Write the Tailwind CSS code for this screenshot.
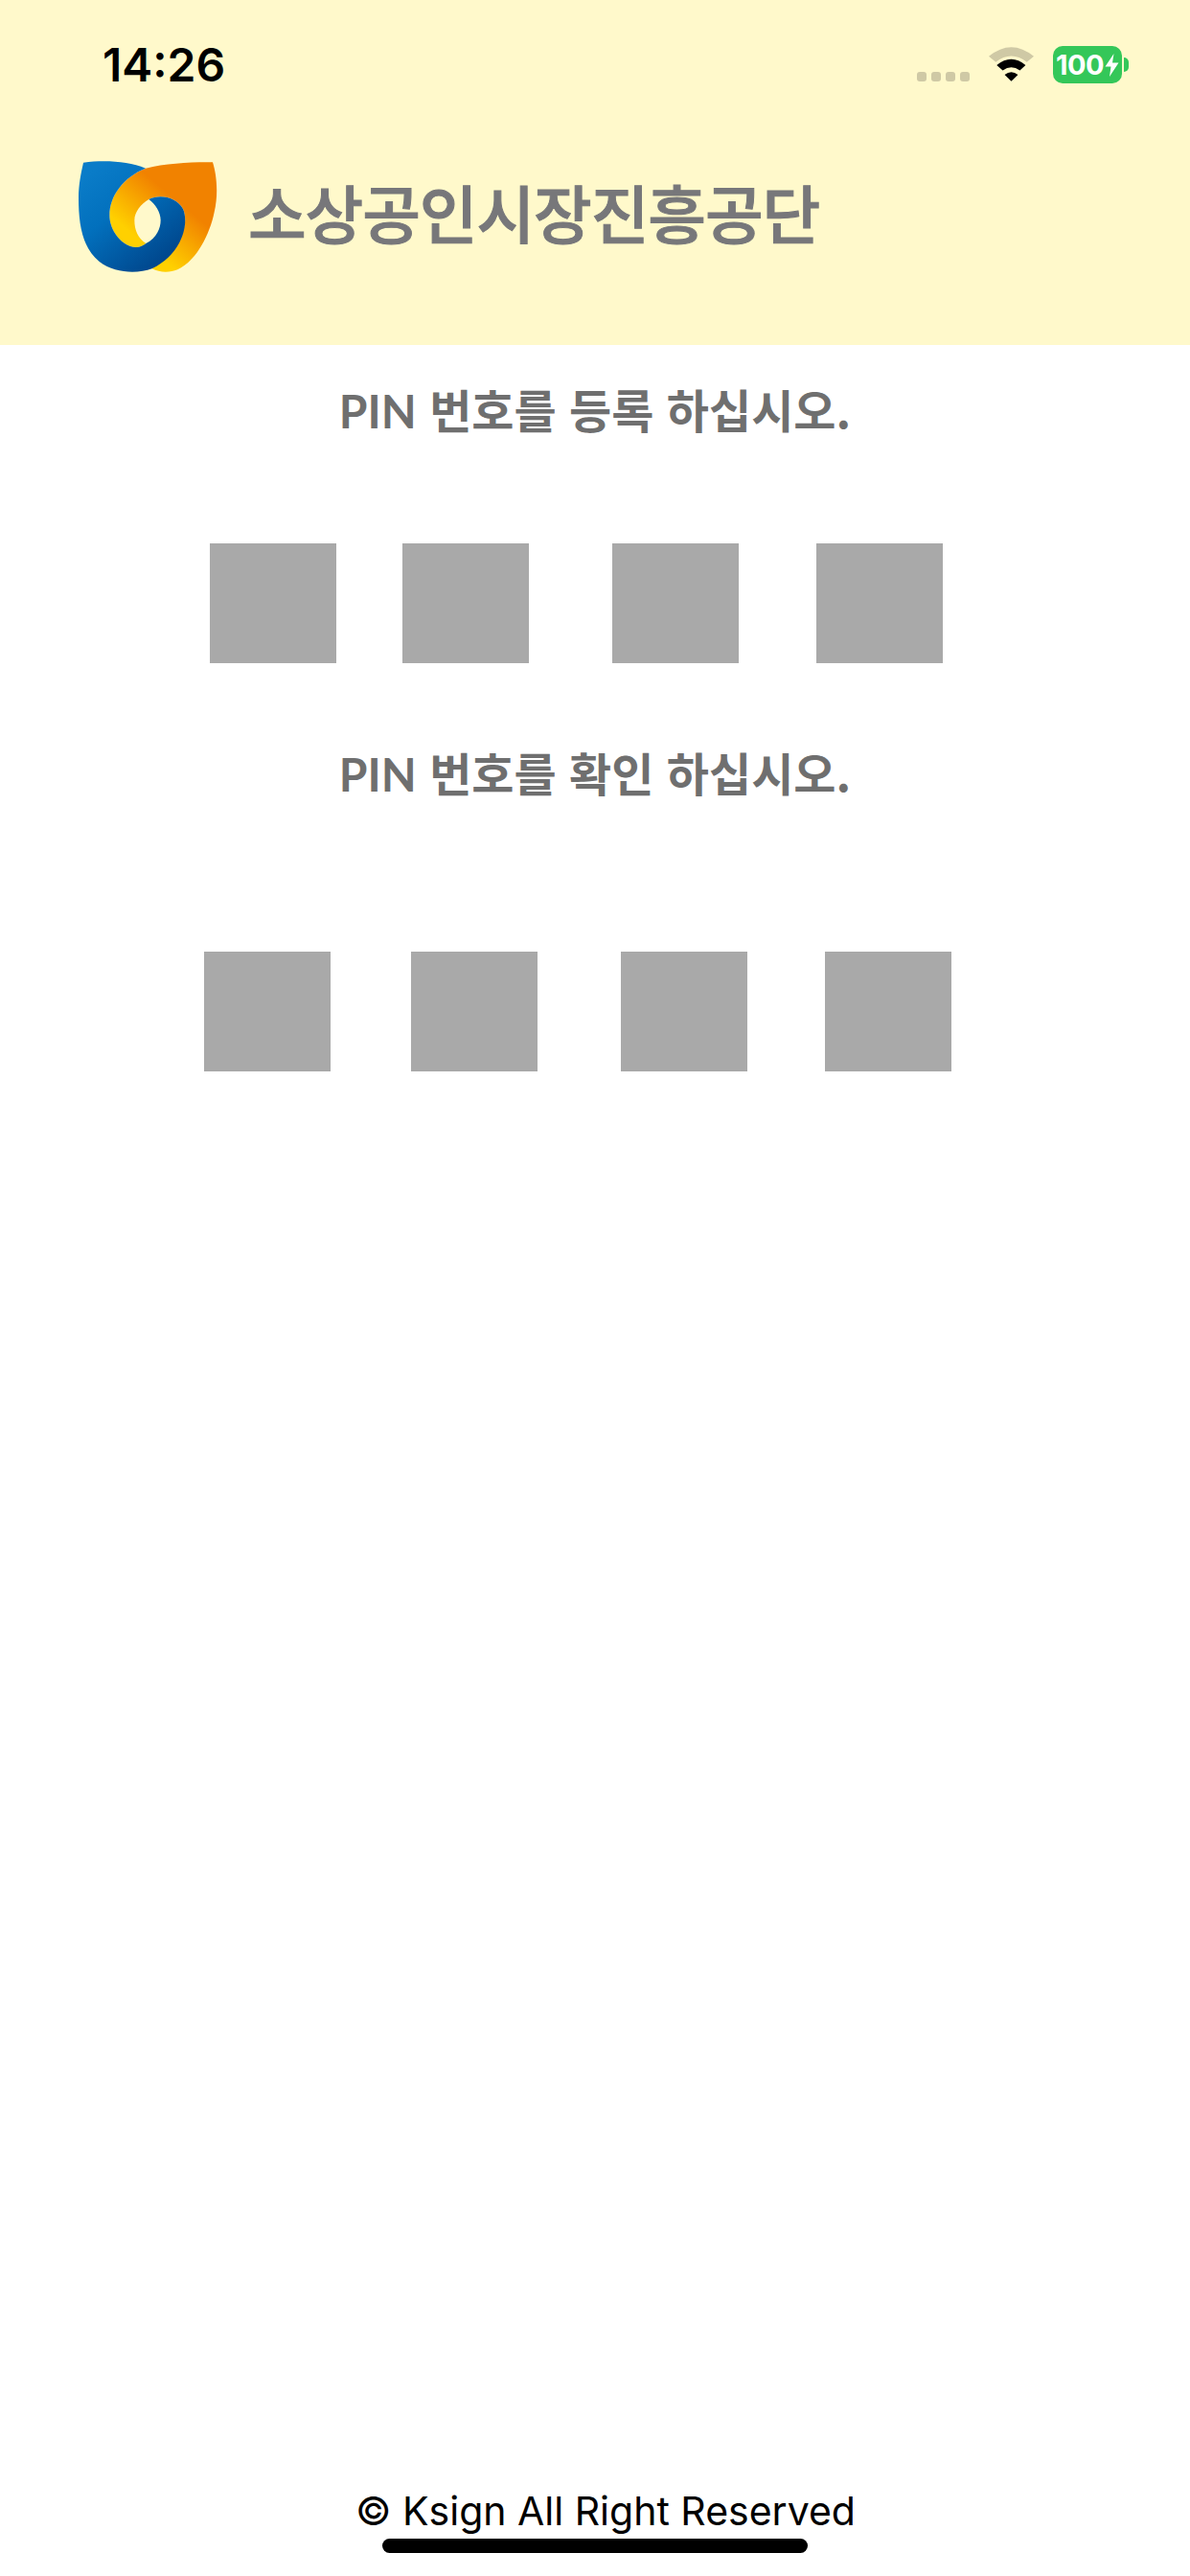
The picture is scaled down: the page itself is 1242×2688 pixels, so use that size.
<!DOCTYPE html>
<html lang="ko">
<head>
    <meta charset="UTF-8">
    <meta name="viewport" content="width=device-width, initial-scale=1.0">
    <title>PIN 등록</title>
    <script src="https://cdn.jsdelivr.net/npm/@tailwindcss/browser@4"></script>
</head>
<body class="bg-white">
    <div class="relative w-[1242px] h-[2688px] flex flex-col overflow-hidden bg-white">

        <!-- Header -->
        <header class="h-[360px] shrink-0 bg-[#fff9cb]">
            <!-- Status bar -->
            <div class="h-[168px] flex items-start">
                <span class="ml-[107px] mt-[39px] text-[48px] leading-[57px] font-semibold text-black font-['Inter',sans-serif]">14:26</span>
                <div class="ml-auto mr-[64px] mt-[48px] flex items-start">
                    <div class="mt-[27px] flex gap-[5px]">
                        <span class="w-[10px] h-[10px] rounded-[3px] bg-[#cfc9a5]"></span>
                        <span class="w-[10px] h-[10px] rounded-[3px] bg-[#cfc9a5]"></span>
                        <span class="w-[10px] h-[10px] rounded-[3px] bg-[#cfc9a5]"></span>
                        <span class="w-[10px] h-[10px] rounded-[3px] bg-[#cfc9a5]"></span>
                    </div>
                    <svg class="ml-[20px] mt-[1px]" width="47" height="36" viewBox="305 57 142 108">
                        <path d="M305 86 Q376 28 447 86 L425 104 Q376 66 327 104 Z" fill="#cfc9a5"/>
                        <path d="M330 114 Q376 76 421 114 L403 131 Q376 110 349 131 Z" fill="#000"/>
                        <path d="M355 144 Q376 128 397 144 L376 165 Z" fill="#000"/>
                    </svg>
                    <div class="ml-[20px] flex items-center">
                        <div class="w-[72px] h-[39px] rounded-[10px] bg-[#34c759] flex items-center pl-[3px]">
                            <span class="text-[29px] leading-[39px] font-bold text-white font-['Inter',sans-serif] tracking-[-0.5px]">100</span>
                            <svg class="ml-[1px]" width="15" height="24" viewBox="0 0 15 24">
                                <path d="M9.5 0 L0.5 13.5 L6.5 13.5 L5 24 L14.5 9.5 L8 9.5 Z" fill="#fff"/>
                            </svg>
                        </div>
                        <div class="ml-[2px] w-[5px] h-[15px] rounded-r-full bg-[#34c759]"></div>
                    </div>
                </div>
            </div>
            <!-- Logo -->
            <div class="ml-[82px] flex items-start">
                <svg width="145" height="116" viewBox="65 55 435 348">
                    <defs>
                        <linearGradient id="logoBlue" x1="0.1" y1="0.1" x2="0.75" y2="0.95">
                            <stop offset="0" stop-color="#0a7cc8"/>
                            <stop offset="0.4" stop-color="#0270bd"/>
                            <stop offset="1" stop-color="#00468c"/>
                        </linearGradient>
                        <linearGradient id="logoOrange" x1="0.78" y1="0.2" x2="0.25" y2="0.85">
                            <stop offset="0" stop-color="#f18200"/>
                            <stop offset="0.25" stop-color="#f18200"/>
                            <stop offset="0.85" stop-color="#ffd000"/>
                        </linearGradient>
                    </defs>
                    <path d="M485 59 C420 58 340 62 275 78 C205 105 162 165 162 225 C162 275 205 325 245 325 C258 325 268 320 276 313 C250 295 240 270 240 240 C240 215 260 190 285 175 C320 158 372 168 392 205 C410 245 395 320 295 392 C320 405 350 405 375 395 C430 370 475 290 490 215 C503 160 498 100 485 59 Z" fill="url(#logoOrange)"/>
                    <path d="M80 60 C145 52 220 55 275 78 C205 105 162 165 162 225 C162 275 205 325 245 325 C258 325 268 320 276 313 C310 295 322 265 322 240 C322 215 305 190 285 175 C320 158 372 168 392 205 C412 250 390 345 295 392 C250 408 180 408 130 370 C75 325 65 250 65 170 C65 130 72 95 80 60 Z" fill="url(#logoBlue)"/>
                </svg>
                <span class="ml-[32px] mt-[10px] text-[66px] leading-[84px] font-medium tracking-[-1.1px] text-[#77777a] [-webkit-text-stroke:1px_#77777a] font-['Noto_Sans_CJK_KR',sans-serif]">소상공인시장진흥공단</span>
            </div>
        </header>

        <!-- PIN register -->
        <p class="mt-[36px] text-center text-[48px] leading-[60px] font-bold text-[#6f6f6f] font-['Noto_Sans_CJK_KR',sans-serif]"><span class="leading-none font-['Lato',sans-serif]">PIN</span> 번호를 등록 하십시오.</p>
        <div class="mt-[111px] pl-[219px] flex">
            <div class="w-[132px] h-[125px] bg-[#a9a9a9]"></div>
            <div class="ml-[69px] w-[132px] h-[125px] bg-[#a9a9a9]"></div>
            <div class="ml-[87px] w-[132px] h-[125px] bg-[#a9a9a9]"></div>
            <div class="ml-[81px] w-[132px] h-[125px] bg-[#a9a9a9]"></div>
        </div>

        <!-- PIN confirm -->
        <p class="mt-[83px] text-center text-[48px] leading-[60px] font-bold text-[#6f6f6f] font-['Noto_Sans_CJK_KR',sans-serif]"><span class="leading-none font-['Lato',sans-serif]">PIN</span> 번호를 확인 하십시오.</p>
        <div class="mt-[158px] pl-[213px] flex">
            <div class="w-[132px] h-[125px] bg-[#a9a9a9]"></div>
            <div class="ml-[84px] w-[132px] h-[125px] bg-[#a9a9a9]"></div>
            <div class="ml-[87px] w-[132px] h-[125px] bg-[#a9a9a9]"></div>
            <div class="ml-[81px] w-[132px] h-[125px] bg-[#a9a9a9]"></div>
        </div>

        <!-- Footer -->
        <footer class="mt-auto mb-[43px] pl-[371px] text-[41px] leading-[50px] text-black font-['Inter',sans-serif]">© Ksign All Right Reserved</footer>

        <!-- Home indicator -->
        <div class="absolute left-[399px] top-[2649px] w-[444px] h-[15px] rounded-full bg-black"></div>
    </div>
</body>
</html>
